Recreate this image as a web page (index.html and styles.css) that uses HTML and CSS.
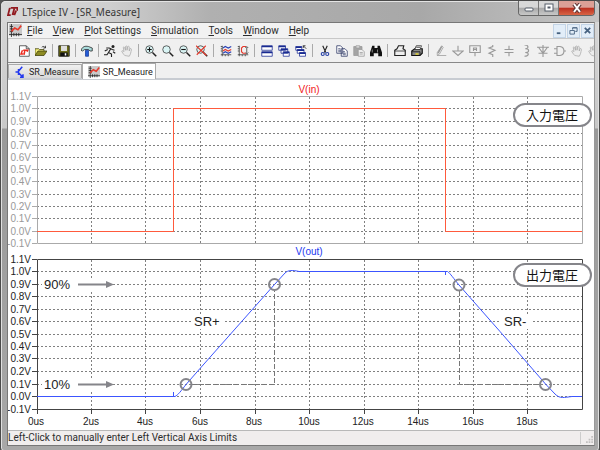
FILE: index.html
```html
<!DOCTYPE html>
<html lang="ja">
<head>
<meta charset="utf-8">
<title>LTspice IV - [SR_Measure]</title>
<link rel="stylesheet" href="styles.css">
</head>
<body>
<svg class="defs" width="0" height="0" aria-hidden="true">
  <symbol id="i-wave" viewBox="0 0 16 16"><path d="M0 0h16v14H0z" fill="#c9c9c9"/><path d="M3 0v16M0 13h16M1 3h4M1 6h4M1 9h4M6 11v4M9 11v4M12 11v4" stroke="#222" fill="none"/><path d="M3 9l4-4 4 2 4-5" stroke="#e8392b" stroke-width="2" fill="none"/></symbol>
  <symbol id="i-bjt" viewBox="0 0 16 16"><path d="M2 8h4M6 4v8M6 7l5-6M6 9l6 6M12 11v4H8" stroke="#2338ee" stroke-width="2" fill="none"/></symbol>
  <symbol id="i-zoom" viewBox="0 0 16 16"><circle cx="6" cy="6" r="5" fill="#d9f4f4" stroke="#333"/><path d="M10 10l5 5" stroke="#222" stroke-width="2"/></symbol>
  <symbol id="i-hand" viewBox="0 0 16 16"><path d="M5 14C3 12 1 9 1 8c1-1 2 0 3 1L3 3c1-1 2 0 2 1l1 3V2c1-1 2-1 2 0v5l1-5c1-1 2 0 2 1v5l1-3c1-1 2 0 2 1-1 4-1 6-3 9z" fill="#ececec" stroke="#aaa"/></symbol>
</svg>

<div class="window">
  <header class="titlebar">
    <svg class="logo" viewBox="0 0 12 10" aria-hidden="true"><path d="M3 1L1 9h3M4 1h8l-1 3M8 2L6 9M10 4L8 9" stroke="#921a20" stroke-width="2" fill="none"/></svg>
    <h1 class="title">LTspice IV - [SR_Measure]</h1>
    <div class="caption">
      <button class="cap" aria-label="Minimize"><svg viewBox="0 0 12 10"><rect x="2" y="5" width="8" height="3" rx="1" fill="#fff" stroke="#555c68"/></svg></button>
      <button class="cap" aria-label="Maximize"><svg viewBox="0 0 12 10"><rect x="2" y="1" width="8" height="7" fill="#fff" stroke="#555c68"/><rect x="5" y="4" width="2" height="1" fill="#fff" stroke="#555c68"/></svg></button>
      <button class="cap close" aria-label="Close"><svg viewBox="0 0 12 10"><path d="M3 1l6 8M9 1L3 9" stroke="#63393a" stroke-width="4"/><path d="M3 1l6 8M9 1L3 9" stroke="#fff" stroke-width="2"/></svg></button>
    </div>
  </header>

  <main class="client">
    <nav class="menubar" aria-label="Menu">
      <svg class="doc" aria-hidden="true"><use href="#i-wave"/></svg>
      <button class="menu"><u>F</u>ile</button>
      <button class="menu"><u>V</u>iew</button>
      <button class="menu"><u>P</u>lot Settings</button>
      <button class="menu"><u>S</u>imulation</button>
      <button class="menu"><u>T</u>ools</button>
      <button class="menu"><u>W</u>indow</button>
      <button class="menu"><u>H</u>elp</button>
      <div class="mdi">
        <button class="child" aria-label="Minimize document"><svg viewBox="0 0 10 10"><path d="M2 8h4" stroke="#46617f" stroke-width="2"/></svg></button>
        <button class="child" aria-label="Restore document"><svg viewBox="0 0 10 10"><path d="M4 4V2h5v4H7M1 5h5v4H1zM4 2h5" stroke="#46617f" fill="none"/></svg></button>
        <button class="child" aria-label="Close document"><svg viewBox="0 0 10 10"><path d="M2 2l6 6M8 2L2 8" stroke="#46617f" stroke-width="2"/></svg></button>
      </div>
    </nav>

    <div class="toolbar" role="toolbar" aria-label="Tools">
      <button class="tool" aria-label="New"><svg viewBox="0 0 16 16"><path d="M2 1h9l4 4v10H2z" fill="#fff" stroke="#333"/><path d="M11 1v4h4" fill="none" stroke="#333"/><path d="M6 7l-2 5h3M7 7h6l-1 2M9 8l-1 5" stroke="#ec2c20" stroke-width="2" fill="none"/></svg></button>
      <button class="tool" aria-label="Open"><svg viewBox="0 0 16 16"><path d="M0 14V5h5l1 1h6v3" fill="#f3ee7a" stroke="#3c3c08"/><path d="M0 14l4-6h12l-4 6z" fill="#8d8b22" stroke="#3c3c08"/><path d="M9 3c2-2 4-1 5 1M14 1v3h-3" stroke="#222" fill="none"/></svg></button>
      <span class="sep tight"></span>
      <button class="tool" aria-label="Save"><svg viewBox="0 0 16 16"><path d="M1 1h14v14H1z" fill="#6b6b16" stroke="#111"/><path d="M4 1h8v7H4z" fill="#ddd"/><path d="M3 10h10v5H3z" fill="#111"/><path d="M9 11h2v3H9z" fill="#fff"/></svg></button>
      <span class="sep tight"></span>
      <button class="tool" aria-label="Control panel"><svg viewBox="0 0 16 16"><path d="M0 7c2-5 5-6 10-5l5 2v4h-3L10 6H5L2 8z" fill="#a8dada" stroke="#222"/><path d="M6 7h4v8H6z" fill="#235cd6" stroke="#173a99"/></svg></button>
      <span class="sep tight"></span>
      <button class="tool" aria-label="Run"><svg viewBox="0 0 16 16"><circle cx="12" cy="2" r="2" fill="#222"/><path d="M3 4h4l4 2 3 1M9 5l-3 5 4 2v4M6 10l-2 3H0M1 8l4-2M12 9l3 2" stroke="#222" stroke-width="1.5" fill="none"/></svg></button>
      <button class="tool" aria-label="Halt" disabled><svg><use href="#i-hand"/></svg></button>
      <span class="sep"></span>
      <button class="tool" aria-label="Zoom in"><svg viewBox="0 0 16 16"><use href="#i-zoom" width="16" height="16"/><path d="M3 6h6M6 3v6" stroke="#111" stroke-width="1.5"/></svg></button>
      <button class="tool" aria-label="Pan"><svg viewBox="0 0 16 16"><use href="#i-zoom" width="16" height="16"/></svg></button>
      <button class="tool" aria-label="Zoom out"><svg viewBox="0 0 16 16"><use href="#i-zoom" width="16" height="16"/><path d="M3 6h6" stroke="#111" stroke-width="1.5"/></svg></button>
      <button class="tool" aria-label="Zoom full extents"><svg viewBox="0 0 16 16"><use href="#i-zoom" width="16" height="16"/><path d="M0 1l14 13M13 1L1 13" stroke="#e5392c" stroke-width="1.5"/></svg></button>
      <span class="sep"></span>
      <button class="tool" aria-label="Autorange"><svg viewBox="0 0 16 16"><path d="M3 1v14M1 13h14M1 2h2M1 5h2M1 8h2M7 13v2M11 13v2" stroke="#333"/><path d="M4 4l3-2 4 2 4-2M4 11l3-2 4 2 4-2" stroke="#2741b5" stroke-width="1.5" fill="none"/><path d="M4 8l3-2 4 2 4-2" stroke="#e5392c" stroke-width="1.5" fill="none"/></svg></button>
      <button class="tool" aria-label="Pick visible traces"><svg viewBox="0 0 16 16"><path d="M3 1v14M1 13h14M1 2h2M1 5h2M1 8h2M7 13v2M11 13v2M13 3v8M11 4l2-2 2 2M11 10l2 2 2-2" stroke="#333" fill="none"/><path d="M12 2H8L6 4v5l2 2h4" stroke="#e5392c" fill="none" stroke-width="1.5"/></svg></button>
      <span class="sep"></span>
      <button class="tool" aria-label="Tile windows"><svg viewBox="0 0 16 16"><path d="M1 1h14v6H1zM1 9h14v6H1z" fill="#fff" stroke="#182a91"/><path d="M1 2h14M1 10h14" stroke="#182a91" stroke-width="2"/></svg></button>
      <button class="tool" aria-label="Cascade windows"><svg viewBox="0 0 16 16"><g fill="#fff" stroke="#182a91"><path d="M1 1h9v6H1zM4 5h9v6H4zM7 9h8v6H7z"/><path d="M1 2h9M4 6h9M7 10h8" stroke-width="2"/></g></svg></button>
      <button class="tool" aria-label="Close all windows"><svg viewBox="0 0 16 16"><g fill="#fff" stroke="#182a91"><path d="M1 2h8v5H1zM3 6h9v5H3zM6 10h8v5H6z"/><path d="M1 3h8M3 7h9M6 11h8" stroke-width="2"/></g><path d="M15 5l-4-4M11 4V1h3" stroke="#111" fill="none"/></svg></button>
      <span class="sep"></span>
      <button class="tool" aria-label="Cut"><svg viewBox="0 0 16 16"><path d="M5 1l4 9M11 1l-4 9" stroke="#222" stroke-width="1.5"/><g fill="none" stroke="#2741a5" stroke-width="1.5"><circle cx="5" cy="12" r="2"/><circle cx="11" cy="12" r="2"/></g></svg></button>
      <button class="tool" aria-label="Copy"><svg viewBox="0 0 16 16"><path d="M1 1h5l3 3v7H1zM7 5h5l3 3v7H7z" fill="#fff" stroke="#26305f"/><path d="M3 5h3M3 7h4M3 9h4M9 9h3M9 11h4M9 13h4" stroke="#26305f"/></svg></button>
      <button class="tool" aria-label="Paste" disabled><svg viewBox="0 0 16 16"><path d="M1 2h11v12H1z" fill="#a5a5a5" stroke="#999"/><path d="M4 1h5v3H4z" fill="#ddd" stroke="#999"/><path d="M7 6h5l3 3v6H7z" fill="#eee" stroke="#999"/><path d="M9 10h4M9 12h4" stroke="#999"/></svg></button>
      <button class="tool" aria-label="Find"><svg viewBox="0 0 16 16"><path d="M3 1h3v3h4V1h3l3 9v5h-5v-4H5v4H0v-5z" fill="#111"/><path d="M3 6v4M10 6v4" stroke="#aaa"/></svg></button>
      <span class="sep"></span>
      <button class="tool" aria-label="Print setup"><svg viewBox="0 0 16 16"><path d="M1 7l3-2 2-4h7l-1 4 3 2v7H1z" fill="#eee" stroke="#222" stroke-width="1.5"/><path d="M1 8h14" stroke="#222"/></svg></button>
      <button class="tool" aria-label="Print"><svg viewBox="0 0 16 16"><path d="M1 8l4-3h10v6l-3 3H1z" fill="#888" stroke="#111" stroke-width="1.5"/><path d="M5 6l2-5h7l-2 5z" fill="#fff" stroke="#222"/><path d="M1 9h11v5M7 3h5" stroke="#111" fill="none"/><path d="M6 11h4v2H6z" fill="#e2d22e"/></svg></button>
      <span class="sep"></span>
      <button class="tool" aria-label="Wire" disabled><svg viewBox="0 0 16 16"><path d="M9 1L3 10v4l3-2 5-9zM3 14h12" stroke="#999" fill="none"/><path d="M9 2L4 11" stroke="#999" stroke-width="2"/></svg></button>
      <button class="tool" aria-label="Ground" disabled><svg viewBox="0 0 16 16"><path d="M8 1v7M1 8h14l-7 6z" stroke="#999" fill="none" stroke-width="1.5"/></svg></button>
      <button class="tool" aria-label="Label net" disabled><svg viewBox="0 0 16 16"><path d="M1 1h14v9H1zM8 10v5M6 8V4h4v4M6 6h4" stroke="#999" fill="none" stroke-width="1.5"/></svg></button>
      <button class="tool" aria-label="Resistor" disabled><svg viewBox="0 0 16 16"><path d="M9 0v2L4 4l8 3-8 4 5 2v3" stroke="#999" fill="none" stroke-width="1.5"/></svg></button>
      <button class="tool" aria-label="Capacitor" disabled><svg viewBox="0 0 16 16"><path d="M8 1v5M8 10v5M2 6h12M2 10h12" stroke="#999" stroke-width="1.5"/></svg></button>
      <button class="tool" aria-label="Inductor" disabled><svg viewBox="0 0 16 16"><path d="M6 0c6 0 6 5 1 5 6 0 6 5 0 5 6 0 5 5-1 5" stroke="#999" fill="none" stroke-width="1.5"/></svg></button>
      <button class="tool" aria-label="Diode" disabled><svg viewBox="0 0 16 16"><path d="M0 3h16M2 3l6 8 6-8M2 11h12M8 0v16" stroke="#999" fill="none" stroke-width="1.5"/></svg></button>
      <button class="tool" aria-label="Component" disabled><svg viewBox="0 0 16 16"><path d="M4 2h4c7 1 7 11 0 12H4zM0 5h4M0 11h4M13 8h3" stroke="#999" fill="none" stroke-width="1.5"/></svg></button>
      <button class="tool" aria-label="Move" disabled><svg><use href="#i-hand"/></svg></button>
      <button class="tool" aria-label="Drag" disabled><svg><use href="#i-hand"/></svg></button>
    </div>

    <div class="tabs" role="tablist">
      <button class="tab" role="tab" aria-selected="false"><svg><use href="#i-bjt"/></svg>SR_Measure</button>
      <button class="tab active" role="tab" aria-selected="true"><svg><use href="#i-wave"/></svg>SR_Measure</button>
    </div>

    <svg class="plots" viewBox="8 80 586 350" role="img" aria-label="V(in), V(out)">
      <g class="pane">
        <text class="name red" x="309" y="93">V(in)</text>
        <path class="grid" d="M37 108.500H582M37 121.500H582M37 133.500H582M37 145.500H582M37 157.500H582M37 169.500H582M37 181.500H582M37 194.500H582M37 206.500H582M37 218.500H582M37 231.500H582M91.500 97V243M145.500 97V243M200.500 97V243M255.500 97V243M309.500 97V243M364.500 97V243M418.500 97V243M473.500 97V243M527.500 97V243"/>
        <path class="box dim" d="M37.500 96.500H582.500V243.500H37.500z"/>
        <path class="box dim" d="M32 96.500h5M32 108.500h5M32 121.500h5M32 133.500h5M32 145.500h5M32 157.500h5M32 169.500h5M32 181.500h5M32 194.500h5M32 206.500h5M32 218.500h5M32 231.500h5M32 243.500h5"/>
        <g class="volts faded">
          <text x="31" y="100">1.1V</text><text x="31" y="112">1.0V</text><text x="31" y="125">0.9V</text><text x="31" y="137">0.8V</text><text x="31" y="149">0.7V</text><text x="31" y="161">0.6V</text><text x="31" y="173">0.5V</text><text x="31" y="185">0.4V</text><text x="31" y="198">0.3V</text><text x="31" y="210">0.2V</text><text x="31" y="222">0.1V</text><text x="31" y="235">0.0V</text><text x="31" y="247">-0.1V</text>
        </g>
        <path class="trace in" d="M37 231.500H173.500V108.500H445.500V231.500H582"/>
      </g>
      <g class="pane">
        <text class="name blue" x="309" y="255">V(out)</text>
        <path class="grid" d="M37 271.500H582M37 284.500H582M37 296.500H582M37 309.500H582M37 321.500H582M37 334.500H582M37 346.500H582M37 358.500H582M37 371.500H582M37 384.500H582M37 396.500H582M91.500 260V409M145.500 260V409M200.500 260V409M255.500 260V409M309.500 260V409M364.500 260V409M418.500 260V409M473.500 260V409M527.500 260V409"/>
        <path class="box" d="M37.500 259.500H582.500V409.500H37.500z"/>
        <path class="box" d="M32 259.500h5M32 271.500h5M32 284.500h5M32 296.500h5M32 309.500h5M32 321.500h5M32 334.500h5M32 346.500h5M32 358.500h5M32 371.500h5M32 384.500h5M32 396.500h5M32 409.500h5M37.500 409v5M91.500 409v5M145.500 409v5M200.500 409v5M255.500 409v5M309.500 409v5M364.500 409v5M418.500 409v5M473.500 409v5M527.500 409v5"/>
        <g class="volts">
          <text x="31" y="263">1.1V</text><text x="31" y="275">1.0V</text><text x="31" y="288">0.9V</text><text x="31" y="300">0.8V</text><text x="31" y="313">0.7V</text><text x="31" y="325">0.6V</text><text x="31" y="338">0.5V</text><text x="31" y="350">0.4V</text><text x="31" y="362">0.3V</text><text x="31" y="375">0.2V</text><text x="31" y="388">0.1V</text><text x="31" y="400">0.0V</text><text x="31" y="413">-0.1V</text>
        </g>
        <g class="times">
          <text x="36" y="425">0us</text><text x="91" y="425">2us</text><text x="145" y="425">4us</text><text x="200" y="425">6us</text><text x="254" y="425">8us</text><text x="309" y="425">10us</text><text x="363" y="425">12us</text><text x="418" y="425">14us</text><text x="473" y="425">16us</text><text x="527" y="425">18us</text>
        </g>
        <path class="blank" d="M42 278h71v13H42zM42 378h71v13H42zM191 316h33v13h-33zM501 316h30v13h-30z"/>
        <path class="trace out" d="M37 396.500H173.500V392M173.500 396.500H175C178 395 181 391 186 384.500L200 368.500 274.500 284.500 285 273C288 270 293 270 299 271.500H445.500V275M445.500 271.500H447.500C450 273 454 279 459 285L500 331.500 545.500 384 555 394C560 399 564 397.500 572 396.500H582"/>
        <path class="measure" d="M192 384.500H274.500V291M459.500 291V384.500H539"/>
        <g class="mark"><circle cx="186" cy="384.500" r="5.500"/><circle cx="274.500" cy="284.500" r="5.500"/><circle cx="459" cy="285" r="5.500"/><circle cx="545.500" cy="384.500" r="5.500"/></g>
        <path class="arrow" d="M78 284.500h29M78 384.500h29"/>
        <path class="head" d="M106 281l8 3.500-8 3.500zM106 381l8 3.500-8 3.500z"/>
        <g class="note"><text x="44" y="289">90%</text><text x="44" y="389">10%</text><text x="194" y="326">SR+</text><text x="504" y="326">SR-</text></g>
      </g>
      <g class="tag"><rect x="514" y="104" width="77" height="22" rx="11"/><text x="552" y="120">入力電圧</text></g>
      <g class="tag"><rect x="514" y="264" width="77" height="22" rx="11"/><text x="552" y="280">出力電圧</text></g>
    </svg>

    <footer class="status"><span class="hint">Left-Click to manually enter Left Vertical Axis Limits</span><span class="grip"><svg viewBox="0 0 8 8" aria-hidden="true"><path d="M6 0h2v2H6zM3 3h2v2H3zM6 3h2v2H6zM0 6h2v2H0zM3 6h2v2H3zM6 6h2v2H6z" fill="#c2c0c0"/></svg></span></footer>
  </main>
</div>
</body>
</html>
```
FILE: styles.css
```css
* { box-sizing: border-box; }
body { margin: 0; background: #555; font: 10px/14px Roboto, "Noto Sans CJK JP", sans-serif; color: #2c2c2c; }
button { margin: 0; padding: 0; border: 0; background: none; font: inherit; color: inherit; }
svg { display: block; }
.defs { position: absolute; }

.window {
  display: flex;
  flex-direction: column;
  min-height: 100vh;
  padding: 0 4px 5px 6px;
  border: 1px solid #4a4a4a;
  border-radius: 6px 6px 4px 4px;
  background: linear-gradient(#d8d8d8, #c8c8c8 127px, #999 128px, #a8a8a8);
  box-shadow: inset 0 0 0 1px #e0e0e0;
}
.titlebar {
  display: flex;
  align-items: center;
  height: 21px;
  margin: 0 -4px 0 -6px;
  padding-left: 6px;
  border-radius: 5px 5px 0 0;
  background: linear-gradient(90deg, #d8d8d8, #cfcfcf 18%, #b0b0b0 35%, #a8a8a8 70%, #c4c4c4);
  box-shadow: inset 0 1px 0 #e4e4e4;
}
.logo { width: 11px; height: 9px; }
.title { flex: 1; margin: 0 0 0 4px; font: 400 10px/18px "Noto Sans", sans-serif; color: #383838; }
.caption { display: flex; align-self: flex-start; margin-right: 4px; border: 1px solid #666; border-top: 0; border-radius: 0 0 4px 4px; overflow: hidden; }
.cap { display: grid; place-items: center; width: 20px; height: 14px; border-right: 1px solid #777; background: linear-gradient(#d8d8d8 45%, #a9a9a9 50%, #c8c8c8); }
.cap svg { width: 12px; height: 10px; }
.cap.close { width: 35px; border-right: 0; background: linear-gradient(#dca096 45%, #bc3020 50%, #d86445); }

.client { flex: 1; display: flex; flex-direction: column; min-width: 0; border: 1px solid #777; border-right-color: #999; background: #f0f0f0; }
.menubar { display: flex; align-items: center; height: 16px; padding-left: 1px; background: #f2f2f2; border-bottom: 1px solid #c8c8c8; }
.doc { width: 13px; height: 13px; margin-right: 5px; }
.menu { margin-right: 10px; line-height: 15px; white-space: nowrap; }
.mdi { display: flex; gap: 1px; margin-left: auto; }
.child { display: grid; place-items: center; width: 13px; height: 14px; border: 1px solid #c3d4e6; background: #e2edf8; }
.child svg { width: 9px; height: 9px; }

.toolbar { display: flex; align-items: center; height: 24px; padding-left: 7px; background: #f0f0f0; border-bottom: 1px solid #888; box-shadow: inset 1px 0 #ddd; overflow: hidden; }
.tool { flex: none; display: grid; place-items: center; width: 17px; height: 17px; }
.tool svg { width: 12px; height: 12px; }
.sep { flex: none; width: 7px; height: 13px; background: linear-gradient(#aaa, #aaa) center / 1px 100% no-repeat; }
.tight { width: 6px; }

.tabs { display: flex; align-items: flex-end; height: 17px; border-bottom: 2px solid #c8ccd2; }
.tab { display: flex; align-items: center; gap: 3px; height: 14px; padding: 0 2px 0 5px; border: 1px solid #aaa; border-bottom: 0; background: linear-gradient(#f0f0f0, #d8d8d8); font-size: 9px; color: #222; }
.tab svg { width: 12px; height: 12px; }
.tab.active { height: 16px; margin-bottom: -1px; background: #fff; }

.plots { width: 100%; height: auto; background: #fff; font: 10px "Liberation Sans", "Noto Sans CJK JP", sans-serif; fill: #222; }
.name, .times { text-anchor: middle; }
.name.red { fill: #f02020; }
.name.blue { fill: #2038f0; }
.volts { text-anchor: end; }
.faded { fill: #999; }
.grid { fill: none; stroke: #808080; stroke-dasharray: 2 2; }
.box { fill: none; stroke: #444; }
.dim { stroke: #aaa; }
.trace { fill: none; }
.in { stroke: #ff5a3c; }
.out { stroke: #3c55ff; }
.blank { fill: #fff; }
.measure { fill: none; stroke: #777; stroke-dasharray: 5 2; }
.mark { fill: none; stroke: #85858a; stroke-width: 2; }
.arrow { stroke: #85858a; stroke-width: 2; }
.head { fill: #85858a; }
.note { font-size: 13px; fill: #222; }
.tag rect { fill: #fff; stroke: #85858a; stroke-width: 2; }
.tag text { font: 13px "Noto Sans CJK JP", sans-serif; text-anchor: middle; fill: #111; }

.status { flex: 1; display: flex; align-items: center; min-height: 14px; background: #f0eded; border-top: 1px solid #b8b8b8; }
.hint { flex: 1; white-space: nowrap; }
.grip { display: flex; align-items: flex-end; justify-content: flex-end; width: 14px; height: 12px; padding: 1px; border-left: 1px solid #ccc; }
.grip svg { width: 7px; height: 7px; }
```
